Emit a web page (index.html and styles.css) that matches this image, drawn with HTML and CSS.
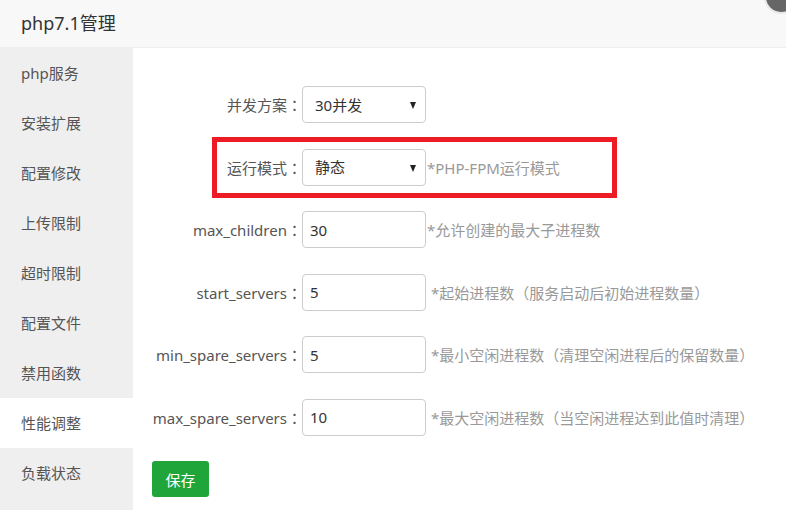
FILE: index.html
```html
<!DOCTYPE html>
<html lang="zh-CN">
<head>
<meta charset="utf-8">
<title>php7.1管理</title>
<link rel="stylesheet" href="styles.css">
</head>
<body>
<div class="layer">
  <div class="layer-head">php7.1管理</div>
  <span class="layer-close"></span>
  <div class="layer-body">
    <ul class="side">
      <li>php服务</li>
      <li>安装扩展</li>
      <li>配置修改</li>
      <li>上传限制</li>
      <li>超时限制</li>
      <li>配置文件</li>
      <li>禁用函数</li>
      <li class="on">性能调整</li>
      <li>负载状态</li>
    </ul>
    <div class="main">
      <div class="row">
        <label class="lbl">并发方案<span class="colon" lang="ja">：</span></label>
        <span class="sel"><select class="ctl"><option>30并发</option></select></span>
      </div>
      <div class="row">
        <label class="lbl">运行模式<span class="colon" lang="ja">：</span></label>
        <span class="sel"><select class="ctl"><option>静态</option></select></span>
        <span class="hint">*PHP-FPM运行模式</span>
        <span class="mark"></span>
      </div>
      <div class="row">
        <label class="lbl">max_children<span class="colon" lang="ja">：</span></label>
        <input class="ctl inp" value="30">
        <span class="hint">*允许创建的最大子进程数</span>
      </div>
      <div class="row">
        <label class="lbl">start_servers<span class="colon" lang="ja">：</span></label>
        <input class="ctl inp" value="5">
        <span class="hint wide">*起始进程数<span class="cj">（</span>服务启动后初始进程数量<span class="cj">）</span></span>
      </div>
      <div class="row">
        <label class="lbl">min_spare_servers<span class="colon" lang="ja">：</span></label>
        <input class="ctl inp" value="5">
        <span class="hint wide">*最小空闲进程数<span class="cj">（</span>清理空闲进程后的保留数量<span class="cj">）</span></span>
      </div>
      <div class="row">
        <label class="lbl">max_spare_servers<span class="colon" lang="ja">：</span></label>
        <input class="ctl inp" value="10">
        <span class="hint wide">*最大空闲进程数<span class="cj">（</span>当空闲进程达到此值时清理<span class="cj">）</span></span>
      </div>
      <button class="btn">保存</button>
    </div>
  </div>
</div>
</body>
</html>
```

FILE: styles.css
```css
* { box-sizing: border-box; }
html, body { margin: 0; padding: 0; background: #fff; }
body {
  font-family: "Noto Sans", "Noto Sans CJK SC", sans-serif;
  font-size: 15px;
  color: #555;
  width: 786px;
  height: 510px;
  overflow: hidden;
}
.layer { position: relative; width: 786px; height: 510px; }
.layer-head {
  height: 48px;
  line-height: 47px;
  padding-left: 21px;
  font-size: 18px;
  color: #333;
  background: #f8f8f8;
  border-bottom: 1px solid #eee;
}
.layer-close {
  position: absolute;
  right: -12px;
  top: -20px;
  width: 34px;
  height: 34px;
  border-radius: 50%;
  background: #666;
  border: 2px solid #e8e8e8;
}
.layer-body { display: flex; height: 462px; }
.side {
  list-style: none;
  margin: 0;
  padding: 0;
  width: 133px;
  background: #efefef;
}
.side li {
  height: 50px;
  line-height: 50px;
  padding-left: 21px;
  color: #555;
}
.side li.on { background: #fff; }
.main {
  flex: 1;
  padding: 38px 0 0 19px;
}
.row {
  position: relative;
  display: flex;
  align-items: center;
  height: 37px;
  margin-bottom: 25.5px;
}
.lbl {
  width: 150px;
  text-align: right;
  color: #555;
  white-space: nowrap;
}
.colon { font-family: "Noto Sans CJK JP", "Noto Sans CJK TC", sans-serif; }
.cj { font-family: "Noto Sans CJK SC", sans-serif; }
.ctl {
  width: 124px;
  height: 37px;
  border: 1px solid #ccc;
  border-radius: 4px;
  background: #fff;
  font-family: inherit;
  font-size: 15px;
  color: #333;
  outline: none;
  margin: 0;
}
.sel { position: relative; display: block; width: 124px; height: 37px; }
.sel select {
  appearance: none;
  -webkit-appearance: none;
  padding: 0 0 0 12px;
}
.sel::after {
  content: "";
  position: absolute;
  right: 10px;
  top: 16px;
  border-left: 3.5px solid transparent;
  border-right: 3.5px solid transparent;
  border-top: 7px solid #222;
  pointer-events: none;
}
.inp { padding: 0 0 0 7px; }
.hint {
  margin-left: 1px;
  color: #999;
  white-space: nowrap;
}
.hint.wide { margin-left: 5px; }
.mark {
  position: absolute;
  left: 60px;
  top: -12px;
  width: 405px;
  height: 61px;
  border: 5px solid #ed1c24;
  pointer-events: none;
}
.btn {
  display: block;
  width: 57px;
  height: 36px;
  margin-top: 0.5px;
  border: 0;
  border-radius: 3px;
  background: #20a53a;
  color: #fff;
  font-family: inherit;
  font-size: 15px;
  padding: 0;
}
```
